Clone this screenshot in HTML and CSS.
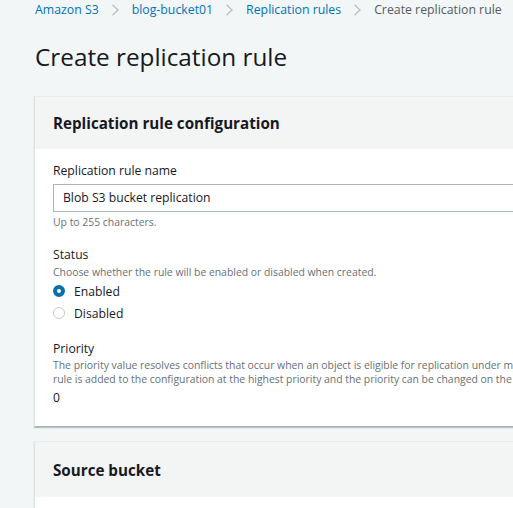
FILE: index.html
```html
<!DOCTYPE html>
<html>
<head>
<meta charset="utf-8">
<link rel="stylesheet" href="styles.css">
</head>
<body>
<div class="page">
  <nav class="crumbs">
    <a class="crumb-link">Amazon S3</a>
    <svg class="chev" viewBox="0 0 10 12" width="10" height="12"><path d="M2.5 0.8 L8 6 L2.5 11.2" fill="none" stroke="#b9bec2" stroke-width="1.3"/></svg>
    <a class="crumb-link">blog-bucket01</a>
    <svg class="chev" viewBox="0 0 10 12" width="10" height="12"><path d="M2.5 0.8 L8 6 L2.5 11.2" fill="none" stroke="#b9bec2" stroke-width="1.3"/></svg>
    <a class="crumb-link">Replication rules</a>
    <svg class="chev" viewBox="0 0 10 12" width="10" height="12"><path d="M2.5 0.8 L8 6 L2.5 11.2" fill="none" stroke="#b9bec2" stroke-width="1.3"/></svg>
    <span class="crumb-current">Create replication rule</span>
  </nav>

  <h1 class="title">Create replication rule</h1>

  <section class="card">
    <div class="card-head"><h2>Replication rule configuration</h2></div>
    <div class="card-body">
      <div class="field">
        <div class="label">Replication rule name</div>
        <div class="input">Blob S3 bucket replication</div>
        <div class="hint">Up to 255 characters.</div>
      </div>
      <div class="field status">
        <div class="label">Status</div>
        <div class="desc">Choose whether the rule will be enabled or disabled when created.</div>
        <div class="radio"><span class="dot checked"></span>Enabled</div>
        <div class="radio"><span class="dot"></span>Disabled</div>
      </div>
      <div class="field priority">
        <div class="label">Priority</div>
        <div class="desc multi">The priority value resolves conflicts that occur when an object is eligible for replication under multiple rules to the same destination bucket. The<br>rule is added to the configuration at the highest priority and the priority can be changed on the Replication rules page.</div>
        <div class="value">0</div>
      </div>
    </div>
  </section>

  <section class="card second">
    <div class="card-head tall"><h2>Source bucket</h2></div>
    <div class="card-body"></div>
  </section>
</div>
</body>
</html>
```
FILE: styles.css
```css
html, body {
  margin: 0;
  padding: 0;
  background: #f2f6f6;
  overflow: hidden;
}
body {
  font-family: "Open Sans", "Noto Sans", sans-serif;
  color: #16191f;
  width: 513px;
  height: 508px;
}
.page {
  padding-left: 34px;
  padding-top: 1px;
}
.crumbs {
  display: flex;
  align-items: center;
  height: 18px;
  font-size: 12.3px;
  line-height: 18px;
  white-space: nowrap;
  margin-left: 1px;
}
.crumb-link {
  color: #0073bb;
}
.chev {
  margin: 0 12px 0 11px;
}
.crumb-current {
  color: #545b64;
}
.title {
  margin: 20px 0 0 1px;
  font-size: 24.3px;
  font-weight: 400;
  line-height: 36px;
  white-space: nowrap;
}
.card {
  margin-top: 21px;
  width: 560px;
  background: #fff;
  border-left: 1px solid #dfe3e5;
  border-bottom: 1px solid #aab7b8;
  box-shadow: 0 1px 1px rgba(0,28,36,0.25);
}
.card-head {
  background: #f3f4f4;
  height: 52px;
  display: flex;
  align-items: center;
  padding-left: 18px;
  border-top: 1px solid #eaeded;
}
.card-head h2 {
  margin: 0;
  font-size: 15.2px;
  font-weight: 700;
  line-height: 22px;
}
.card-body {
  padding: 12px 18px 18px;
}
.label {
  font-size: 12.2px;
  line-height: 20px;
}
.input {
  margin-top: 3px;
  height: 26px;
  border: 1px solid #aab7b8;
  padding-left: 9px;
  font-size: 12.2px;
  line-height: 26px;
}
.hint {
  margin-top: 2px;
  font-size: 10.4px;
  line-height: 16px;
  color: #687078;
}
.status {
  margin-top: 16px;
}
.status .label {
  line-height: 18px;
}
.desc {
  font-size: 10.4px;
  line-height: 16px;
  color: #687078;
  white-space: nowrap;
}
.radio {
  display: flex;
  align-items: center;
  height: 22px;
  font-size: 12.2px;
}
.dot {
  width: 12px;
  height: 12px;
  border: 1px solid #c6cbcd;
  border-radius: 50%;
  margin-right: 9px;
  box-sizing: border-box;
  flex: none;
}
.dot.checked {
  border: 4px solid #0a6fae;
}
.priority {
  margin-top: 16px;
}
.priority .label {
  line-height: 18px;
}
.desc.multi {
  line-height: 14px;
}
.value {
  margin-top: 2px;
  font-size: 12.2px;
  line-height: 20px;
}
.second {
  margin-top: 14px;
  border-bottom: none;
}
.card-head.tall {
  height: 55px;
}
.second .card-body {
  height: 40px;
  padding: 0;
}
```
